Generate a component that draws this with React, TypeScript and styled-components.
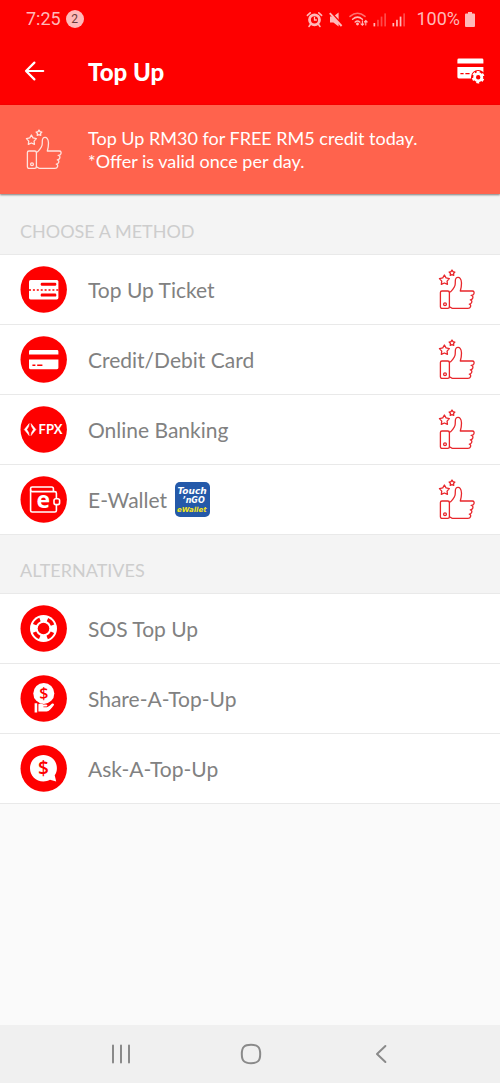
import React from "react";
import styled, { createGlobalStyle } from "styled-components";

const RED = "#fe0000";
const STATUS = "#ffb9b9";

const GlobalStyle = createGlobalStyle`
  *, *::before, *::after { box-sizing: border-box; }
  body { margin: 0; background: #fafafa; }
  button { font: inherit; color: inherit; background: none; border: 0; padding: 0; cursor: pointer; }
  svg { display: block; flex: none; }
`;

const Screen = styled.div`
  display: flex;
  flex-direction: column;
  min-height: 100vh;
  background: #fafafa;
  font-family: Lato, "Liberation Sans", sans-serif;
`;

const Top = styled.header`
  background: ${RED};
  color: #fff;
`;

const StatusBar = styled.div`
  display: flex;
  align-items: center;
  height: 38px;
  padding: 0 25px 0 26px;
  color: ${STATUS};
  font: 18px/20px Roboto, sans-serif;
`;

const Notice = styled.span`
  width: 18px;
  height: 18px;
  margin-left: 5px;
  border-radius: 50%;
  background: ${STATUS};
  color: #6b3a3a;
  font-size: 12px;
  line-height: 18px;
  text-align: center;
`;

const StatusIcons = styled.div`
  display: flex;
  align-items: center;
  gap: 5px;
  margin-left: auto;
`;

const Percent = styled.span`
  margin-left: 5px;
`;

const AppBar = styled.div`
  display: flex;
  align-items: center;
  height: 67px;
  padding: 0 15px 0 22px;
`;

const IconButton = styled.button`
  display: flex;
`;

const Title = styled.h1`
  flex: 1;
  margin: 0 0 0 42px;
  font-size: 24px;
  line-height: 28px;
  font-weight: 900;
`;

const Banner = styled.section`
  position: relative;
  display: flex;
  align-items: center;
  gap: 25px;
  min-height: 89px;
  padding: 0 25px;
  background: #ff634d;
  color: #fff;
  box-shadow: 0 1px 2px rgba(0, 0, 0, 0.5);
`;

const Offer = styled.p`
  margin: 0;
  font-size: 18px;
  line-height: 23px;
`;

const Content = styled.main`
  padding-top: 2px;
  background: #f4f4f4;
`;

const SectionTitle = styled.h2`
  margin: 0;
  padding: 23px 20px 11px;
  border-bottom: 1px solid #e9e9e9;
  color: #cdcdcd;
  font-size: 18px;
  line-height: 24px;
  font-weight: 400;
`;

const List = styled.ul`
  margin: 0;
  padding: 0;
  list-style: none;
  background: #fff;
`;

const Item = styled.li`
  border-bottom: 1px solid #e9e9e9;
`;

const Row = styled.button`
  display: flex;
  align-items: center;
  width: 100%;
  height: 69px;
  padding: 0 24px 0 20px;
  color: #818181;
  font-size: 21px;
  line-height: 28px;
  text-align: left;
`;

const Label = styled.span`
  margin: 0 8px 0 21px;
`;

const Reward = styled.span`
  margin-left: auto;
`;

const NavBar = styled.nav`
  display: flex;
  align-items: center;
  justify-content: space-around;
  height: 58px;
  margin-top: auto;
  padding: 0 54px 0 56px;
  background: #f0f0f0;
`;

const star = (cx: number, cy: number, r: number) =>
  Array.from({ length: 10 }, (_, i) => {
    const a = (Math.PI / 5) * i - Math.PI / 2;
    const d = i % 2 ? r * 0.54 : r;
    return `${(cx + d * Math.cos(a)).toFixed(2)},${(cy + d * Math.sin(a)).toFixed(2)}`;
  }).join(" ");

const Thumb = ({ color }: { color: string }) => (
  <svg width="38" height="44" viewBox="0 0 38 44" fill="none" stroke={color} strokeWidth="1.3" strokeLinejoin="round" strokeLinecap="round">
    <polygon points={star(6.4, 12.2, 5.2)} />
    <polygon points={star(14, 5, 3)} />
    <rect x="2.4" y="23" width="9" height="17.4" rx="1.6" />
    <circle cx="7" cy="36.3" r="1.4" />
    <path d="M11.4 24.4C13.5 23.8 16.4 19.3 17 17.4C17.6 15.6 16.9 12.3 17.7 10.8C18.5 9.2 21 9 22.1 10.3C24.4 13 23.5 18.5 22.3 23H34.3C36.2 23 36.4 24.6 35.8 25.9C35.3 27 34.4 27.4 33.2 27.4C34.9 27.8 35.2 29 34.7 30.2C34.3 31.4 33.4 31.8 32.3 31.8C33.9 32.3 34.1 33.4 33.6 34.5C33.1 35.7 32.3 36.1 31.3 36.1C32.7 36.6 32.9 37.6 32.5 38.7C32.1 39.9 31.3 40.4 30 40.4H14.6C13.2 40.4 12.6 39 11.4 38.8" />
  </svg>
);

const Disc = ({ children }: { children: React.ReactNode }) => (
  <svg width="47" height="47" viewBox="0 0 47 47" aria-hidden="true">
    <circle cx="23.7" cy="23.5" r="23.2" fill={RED} />
    {children}
  </svg>
);

const TicketIcon = () => (
  <Disc>
    <rect x="9" y="14" width="29.4" height="19.4" rx="1.6" fill="#fff" />
    <path d="M9 24H38.4" stroke={RED} strokeWidth="1.5" strokeDasharray="2 1.9" />
    <rect x="20.7" y="16.7" width="15.6" height="3" rx="1.2" fill={RED} />
    <rect x="20.7" y="27.6" width="15.6" height="3" rx="1.2" fill={RED} />
  </Disc>
);

const CardIcon = () => (
  <Disc>
    <path d="M9 18.6V15.4Q9 14 10.4 14H37Q38.4 14 38.4 15.4V18.6ZM9 23.6H38.4V31.8Q38.4 33.2 37 33.2H10.4Q9 33.2 9 31.8Z" fill="#fff" />
    <path d="M12.4 29.2H15.4M17.2 29.2H22.4" stroke={RED} strokeWidth="1.5" />
  </Disc>
);

const FpxIcon = () => (
  <Disc>
    <path d="M9.2 17.6L8.6 20.6L6.8 23.6L8.6 26.6L9.2 29.6L4.3 23.6ZM11 17.6L15.9 23.6L11 29.6L11.6 26.6L13.4 23.6L11.6 20.6Z" fill="#fff" stroke="#fff" strokeWidth="0.5" strokeLinejoin="round" />
    <text x="18.6" y="28.4" fill="#fff" fontFamily="Lato, sans-serif" fontSize="13" fontWeight="700">FPX</text>
  </Disc>
);

const WalletIcon = () => (
  <Disc>
    <g fill="none" stroke="#fff" strokeWidth="1.6" strokeLinejoin="round">
      <path d="M36.4 22.8V17.2Q36.4 15.6 34.8 15.6H12.2Q10.6 15.6 10.6 14V34.4Q10.6 36 12.2 36H34.8Q36.4 36 36.4 34.4V28.6" />
      <path d="M10.6 14.6V12.6Q10.6 11 12.2 11H31.6Q33.4 11 33.4 12.8V15.6" />
      <rect x="34" y="22.8" width="5.6" height="5.8" rx="1.8" />
    </g>
    <text x="23.4" y="32.4" textAnchor="middle" fill="#fff" fontFamily="Open Sans, sans-serif" fontSize="23" fontWeight="700">e</text>
  </Disc>
);

const LifebuoyIcon = () => (
  <Disc>
    <circle cx="23.5" cy="23.5" r="13.5" fill="#fff" />
    <circle cx="23.5" cy="23.5" r="5.8" fill={RED} />
    <circle cx="23.5" cy="23.5" r="9.7" fill="none" stroke={RED} strokeWidth="3.6" strokeDasharray="7.6 7.635" transform="rotate(22.5 23.5 23.5)" />
  </Disc>
);

const ShareIcon = () => (
  <Disc>
    <circle cx="23.8" cy="18.4" r="10.5" fill="#fff" />
    <text x="23.8" y="24" textAnchor="middle" fill={RED} fontFamily="Open Sans, sans-serif" fontSize="16" fontWeight="600">$</text>
    <path d="M14.6 28.2H17.2V37.4H14.6ZM18.4 29.2C20 28.2 21.8 28.2 23.2 29.4H26.2C27.8 29.6 27.8 31.4 26.2 31.6H23.4V32.2H27C29 31.8 30.4 30 31.8 28.8C33.2 28 34.6 29 33.8 30.2C31.4 33.4 29.2 36.4 26.6 36.6H18.4Z" fill="#fff" />
  </Disc>
);

const AskIcon = () => (
  <Disc>
    <path d="M23.4 10C31 10 36.9 15.8 36.9 23.2C36.9 25.8 36.2 28.2 34.7 30.3L36.2 36.4L30 34.8C28 36 25.8 36.5 23.4 36.5C15.9 36.5 10 30.7 10 23.2C10 15.8 15.9 10 23.4 10Z" fill="#fff" />
    <text x="23.4" y="30.2" textAnchor="middle" fill={RED} fontFamily="Open Sans, sans-serif" fontSize="19" fontWeight="600">$</text>
  </Disc>
);

const TouchNGo = () => (
  <svg width="35" height="35" viewBox="0 0 35 35" role="img" aria-label="Touch n Go eWallet">
    <rect width="35" height="35" rx="5" fill="#2459a9" />
    <g fontFamily="DejaVu Sans, sans-serif" fontWeight="700" fontStyle="italic">
      <text x="2.4" y="11.6" fill="#fff" fontSize="9">Touch</text>
      <text x="7.6" y="21" fill="#fff" fontSize="8">’nGO</text>
      <text x="2" y="30.4" fill="#f5e51b" fontSize="7">eWallet</text>
    </g>
  </svg>
);

const BackArrow = () => (
  <svg width="24" height="24" viewBox="0 1 24 24" fill="none" stroke="#fff" strokeWidth="2.2" strokeLinecap="round" strokeLinejoin="round">
    <path d="M21.2 12H4M12.4 3.6L4 12L12.4 20.4" />
  </svg>
);

const CardSettings = () => (
  <svg width="28" height="28" viewBox="0 1 28 28">
    <path d="M0.4 6.6V3Q0.4 1.6 1.8 1.6H25Q26.4 1.6 26.4 3V6.6ZM0.4 10H26.4V21.4H1.8Q0.4 21.4 0.4 20Z" fill="#fff" />
    <path d="M3.4 16.6H6.6M8.4 16.6H12.6" stroke={RED} strokeWidth="1.3" />
    <circle cx="21.2" cy="20.2" r="7.2" fill={RED} />
    <circle cx="21.2" cy="20.2" r="3.6" fill="none" stroke="#fff" strokeWidth="2.8" />
    <circle cx="21.2" cy="20.2" r="5.3" fill="none" stroke="#fff" strokeWidth="2" strokeDasharray="2.8 2.75" transform="rotate(-105 21.2 20.2)" />
  </svg>
);

const AlarmIcon = () => (
  <svg width="17" height="17" viewBox="0 0 17 17" fill="none" stroke={STATUS} strokeLinecap="round">
    <circle cx="8.5" cy="8.8" r="5" strokeWidth="2.8" />
    <path d="M8.5 6.4V9H10.4" strokeWidth="1.3" />
    <path d="M1.4 4.4L4.2 1.8M15.6 4.4L12.8 1.8M4.4 13.6L3 15.4M12.6 13.6L14 15.4" strokeWidth="1.6" />
  </svg>
);

const MuteIcon = () => (
  <svg width="16" height="17" viewBox="0 0 16 17">
    <path d="M2 5.6H5.4L10.6 1.4V15.4L5.4 11.4H2Z" fill={STATUS} />
    <path d="M2.8 1.4L14.6 14.2" stroke={RED} strokeWidth="2" />
    <path d="M1.8 2.2L13.6 15" stroke={STATUS} strokeWidth="1.9" />
  </svg>
);

const WifiIcon = () => (
  <svg width="19" height="17" viewBox="0 0 19 17" fill="none" stroke={STATUS} strokeWidth="1.5" strokeLinecap="round">
    <path d="M1 5.4Q8.5 -1 16 5.4" opacity="0.6" />
    <path d="M3.6 8.2Q8.5 4 13.4 8.2M6.2 11Q8.5 9.2 10.8 11" />
    <circle cx="8.5" cy="13" r="0.7" fill={STATUS} />
    <path d="M13.4 9.8V14M12 12.8L13.4 14.2L14.8 12.8M16.8 14V9.8M15.4 11L16.8 9.6L18.2 11" strokeWidth="1.1" />
  </svg>
);

const SignalIcon = ({ level }: { level: number }) => (
  <svg width="14" height="15" viewBox="0 0 14 15" fill={STATUS}>
    {[0, 1, 2, 3].map((i) => (
      <rect key={i} x={0.5 + i * 3.6} y={11 - i * 3.2} width="1.7" height={3.4 + i * 3.2} opacity={i < level ? 1 : 0.4} />
    ))}
  </svg>
);

const BatteryIcon = () => (
  <svg width="10" height="15" viewBox="0 0 10 15" fill={STATUS}>
    <path d="M3 0H7V1.6H9Q10 1.6 10 2.6V14Q10 15 9 15H1Q0 15 0 14V2.6Q0 1.6 1 1.6H3Z" />
  </svg>
);

const NavIcon = ({ d }: { d: string }) => (
  <svg width="24" height="24" viewBox="0 0 24 24" fill="none" stroke="#8a8a8a" strokeWidth="2" strokeLinecap="round" strokeLinejoin="round">
    <path d={d} />
  </svg>
);

const methods = [
  { name: "Top Up Ticket", Icon: TicketIcon },
  { name: "Credit/Debit Card", Icon: CardIcon },
  { name: "Online Banking", Icon: FpxIcon },
  { name: "E-Wallet", Icon: WalletIcon, extra: <TouchNGo /> },
];

const alternatives = [
  { name: "SOS Top Up", Icon: LifebuoyIcon },
  { name: "Share-A-Top-Up", Icon: ShareIcon },
  { name: "Ask-A-Top-Up", Icon: AskIcon },
];

export default function App() {
  return (
    <Screen>
      <GlobalStyle />
      <Top>
        <StatusBar>
          <span>7:25</span>
          <Notice>2</Notice>
          <StatusIcons>
            <AlarmIcon />
            <MuteIcon />
            <WifiIcon />
            <SignalIcon level={1} />
            <SignalIcon level={3} />
            <Percent>100%</Percent>
            <BatteryIcon />
          </StatusIcons>
        </StatusBar>
        <AppBar>
          <IconButton type="button" aria-label="Back"><BackArrow /></IconButton>
          <Title>Top Up</Title>
          <IconButton type="button" aria-label="Card settings"><CardSettings /></IconButton>
        </AppBar>
      </Top>
      <Banner>
        <Thumb color="#ffe3de" />
        <Offer>
          Top Up RM30 for FREE RM5 credit today.
          <br />
          *Offer is valid once per day.
        </Offer>
      </Banner>
      <Content>
        <SectionTitle>CHOOSE A METHOD</SectionTitle>
        <List>
          {methods.map(({ name, Icon, extra }) => (
            <Item key={name}>
              <Row type="button">
                <Icon />
                <Label>{name}</Label>
                {extra}
                <Reward><Thumb color="#e8262b" /></Reward>
              </Row>
            </Item>
          ))}
        </List>
        <SectionTitle>ALTERNATIVES</SectionTitle>
        <List>
          {alternatives.map(({ name, Icon }) => (
            <Item key={name}>
              <Row type="button">
                <Icon />
                <Label>{name}</Label>
              </Row>
            </Item>
          ))}
        </List>
      </Content>
      <NavBar>
        <IconButton type="button" aria-label="Recent apps"><NavIcon d="M4 3.6V20.4M12 3.6V20.4M20 3.6V20.4" /></IconButton>
        <IconButton type="button" aria-label="Home"><NavIcon d="M12 2.8C18.8 2.8 21.2 5.2 21.2 12C21.2 18.8 18.8 21.2 12 21.2C5.2 21.2 2.8 18.8 2.8 12C2.8 5.2 5.2 2.8 12 2.8Z" /></IconButton>
        <IconButton type="button" aria-label="Back to previous app"><NavIcon d="M16.4 4L8 12L16.4 20" /></IconButton>
      </NavBar>
    </Screen>
  );
}
